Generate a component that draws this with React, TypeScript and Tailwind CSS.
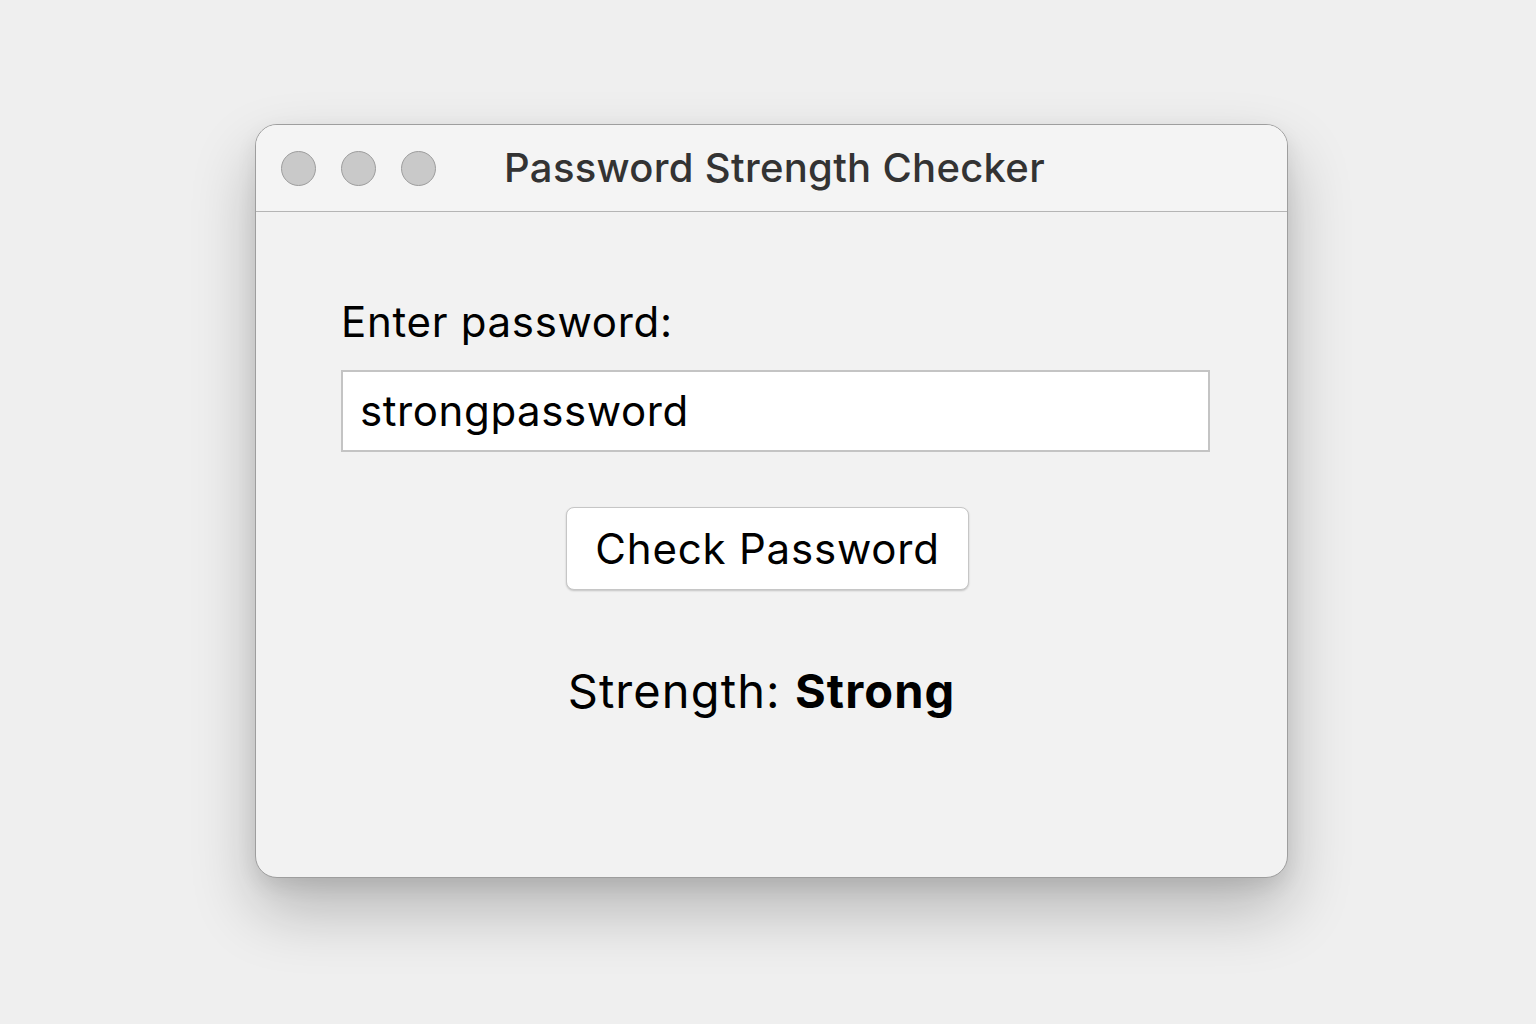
import React from 'react';

const TrafficLight: React.FC = () => (
	<span className="block w-[35px] h-[35px] rounded-full bg-[#c9c9c9] border border-[#9d9d9d]" />
);

const App: React.FC = () => {
	return (
		<div
			className="min-h-[1024px] bg-[#efefef] pt-[124px] pl-[255px]"
			style={{ fontFamily: 'Inter, "Noto Sans", "Liberation Sans", sans-serif' }}
		>
			<div className="w-[1033px] h-[754px] rounded-[22px] border border-[#9e9e9e] bg-[#f2f2f2] overflow-hidden shadow-[0_32px_64px_rgba(0,0,0,0.24),0_8px_20px_rgba(0,0,0,0.08)] flex flex-col">
				<div className="relative h-[87px] shrink-0 bg-[#f4f4f4] border-b border-[#b5b5b5] flex items-center px-[25px]">
					<div className="flex items-center gap-[25px]">
						<TrafficLight />
						<TrafficLight />
						<TrafficLight />
					</div>
					<h1 className="absolute inset-0 flex items-center justify-center pl-[6px] text-[40px] font-medium text-[#333333] tracking-[0.3px]">
						Password Strength Checker
					</h1>
				</div>
				<div className="flex flex-col pl-[85px] pt-[86px]">
					<label className="text-[42px] leading-[48px] tracking-[0.7px] text-black">Enter password:</label>
					<div className="mt-[24px] w-[869px] h-[82px] bg-white border-2 border-[#c4c4c4] flex items-center px-[17px]">
						<span className="text-[42px] leading-[48px] tracking-[0.6px] text-black">strongpassword</span>
					</div>
					<div className="w-[869px] flex justify-center mt-[55px]">
						<button className="w-[403px] h-[83px] ml-[-16px] rounded-[8px] bg-white border border-[#c6c6c6] shadow-[0_1px_2px_rgba(0,0,0,0.2)] text-[42px] tracking-[0.8px] text-black">
							Check Password
						</button>
					</div>
					<div className="w-[869px] flex justify-center mt-[73px] ml-[-14px]">
						<p className="text-[47px] leading-[55px] tracking-[1.1px] text-black">
							Strength: <span className="font-bold">Strong</span>
						</p>
					</div>
				</div>
			</div>
		</div>
	);
};

export default App;
